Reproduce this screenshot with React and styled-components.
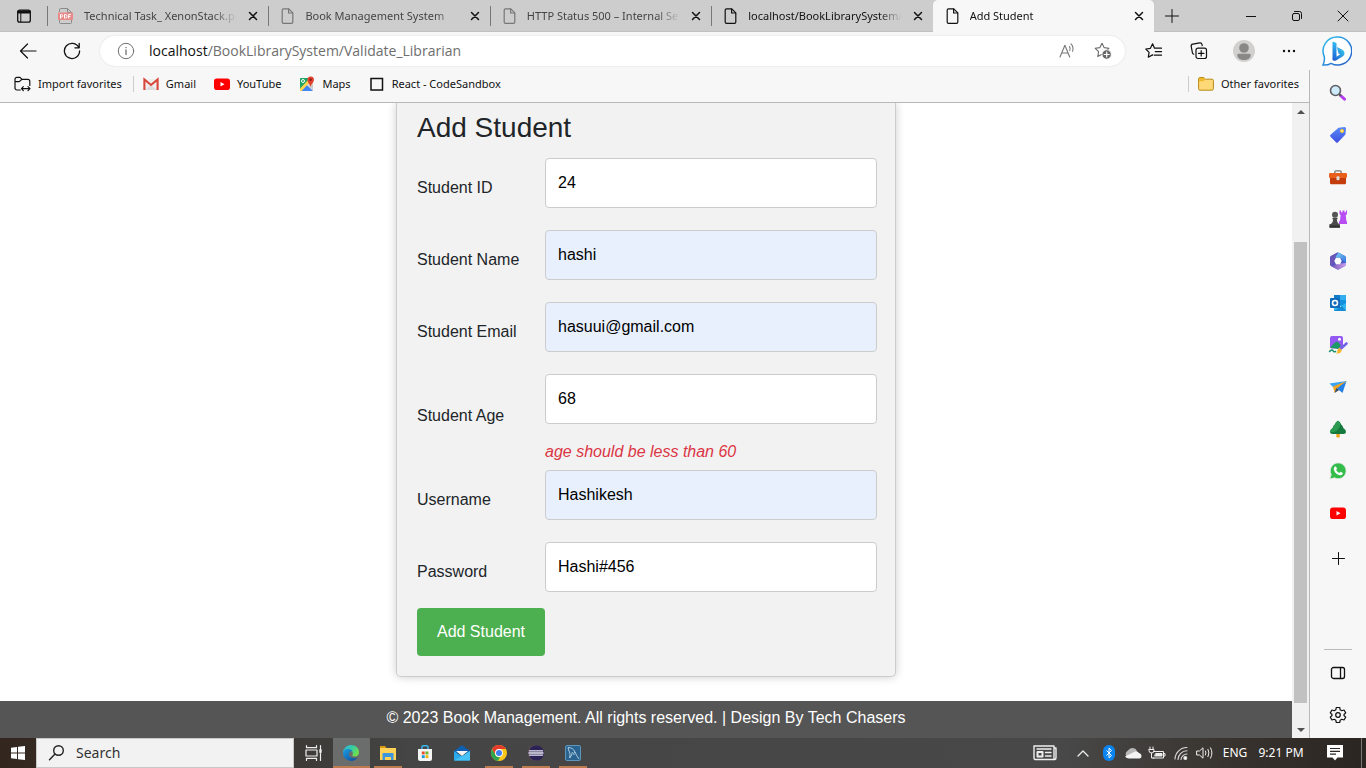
import React from 'react';
import styled, { createGlobalStyle, css } from 'styled-components';

const GlobalStyle = createGlobalStyle`
  * { box-sizing: border-box; }
  body { margin: 0; }
  button { border: 0; padding: 0; background: none; color: inherit; font: inherit; cursor: pointer; }
  a { color: inherit; text-decoration: none; }
  svg { display: block; flex: none; }
`;

const uiFont = `"Noto Sans", "Open Sans", sans-serif`;
const addressFont = `"Open Sans", "Noto Sans", sans-serif`;
const pageFont = `"Liberation Sans", Arial, sans-serif`;

const Desktop = styled.div`
  height: 100vh;
  display: flex;
  flex-direction: column;
  overflow: hidden;
  background: #fff;
  font: 11px/16px ${uiFont};
  color: #111;
`;

/* ---------- tab strip ---------- */

const TabStrip = styled.header`
  flex: none;
  display: flex;
  height: 32px;
  background: #cdcdcd;
  box-shadow: inset 0 -1px #c0c0c0;
`;
const TabActions = styled.button`
  width: 47px;
  display: grid;
  place-items: center;
`;
const Tabs = styled.div`
  display: flex;
  flex: 0 1 1107px;
  min-width: 0;
`;
const Tab = styled.div`
  flex: 1 1 0;
  min-width: 0;
  display: flex;
  align-items: center;
  gap: 10px;
  padding: 0 9px 0 11px;
  position: relative;
  color: ${(p) => (p.$dim ? '#444' : '#111')};
  &::before {
    content: '';
    position: absolute;
    left: 0;
    top: 6px;
    width: 1px;
    height: 20px;
    background: ${(p) => (p.$active ? 'transparent' : '#777')};
  }
  ${(p) => p.$active && css`
    background: #f7f7f7;
    border-radius: 5px 5px 0 0;
  `}
`;
const TabTitle = styled.span`
  flex: 1;
  min-width: 0;
  white-space: nowrap;
  mask-image: linear-gradient(to right, #000 calc(100% - 24px), transparent);
`;
const TabClose = styled.button`
  flex: none;
  width: 12px;
  height: 16px;
  display: grid;
  place-items: center;
  color: #111;
`;
const NewTab = styled.button`
  width: 36px;
  display: grid;
  place-items: center;
`;
const WindowButtons = styled.div`
  display: flex;
  margin-left: auto;
`;
const WindowButton = styled.button`
  width: 46px;
  display: grid;
  place-items: center;
`;

/* ---------- toolbar ---------- */

const Toolbar = styled.nav`
  flex: none;
  display: flex;
  align-items: center;
  height: 38px;
  padding: 0 4px 0 6px;
  background: #f7f7f7;
`;
const ToolButton = styled.button`
  flex: none;
  width: ${(p) => p.$width || 45}px;
  height: 30px;
  display: grid;
  place-items: center;
`;
const Omnibox = styled.div`
  flex: 1;
  min-width: 0;
  display: flex;
  align-items: center;
  height: 30px;
  margin: 0 6px;
  padding: 0 4px 0 17px;
  background: #fff;
  border-radius: 15px;
  box-shadow: 0 0 2px #0002;
  font: 14px/20px ${addressFont};
`;
const Host = styled.label`
  margin-left: 14px;
`;
const Address = styled.input`
  flex: 1;
  min-width: 0;
  padding: 0;
  border: 0;
  outline: 0;
  background: none;
  color: #6e6e6e;
  font: inherit;
`;

/* ---------- browser body ---------- */

const Body = styled.div`
  flex: 1;
  min-height: 0;
  display: flex;
`;
const Viewport = styled.div`
  flex: 1;
  min-width: 0;
  display: flex;
  flex-direction: column;
`;
const Favorites = styled.nav`
  flex: none;
  display: flex;
  align-items: center;
  height: 33px;
  padding: 0 10px 4px 14px;
  gap: 18px;
  background: #f7f7f7;
  border-bottom: 1px solid #b8b8b8;
`;
const Favorite = styled.a`
  display: flex;
  align-items: center;
  gap: 7px;
  white-space: nowrap;
`;
const FavoriteGroup = styled.div`
  display: flex;
  align-items: center;
  gap: 9px;
  margin-left: ${(p) => (p.$end ? 'auto' : '-7px')};
`;
const Divider = styled.span`
  width: 1px;
  height: 16px;
  background: #ccc;
`;
const PageArea = styled.div`
  flex: 1;
  min-height: 0;
  display: flex;
`;
const Page = styled.main`
  flex: 1;
  min-width: 0;
  display: flex;
  flex-direction: column;
  justify-content: flex-end;
  overflow: hidden;
  background: #fff;
  color: #212529;
  font: 16px/24px ${pageFont};
`;
const Scrollbar = styled.div`
  flex: none;
  width: 17px;
  display: flex;
  flex-direction: column;
  align-items: center;
  background: #f1f1f1;
`;
const ScrollArrow = styled.button`
  width: 17px;
  height: 17px;
  display: grid;
  place-items: center;
`;
const ScrollTrack = styled.div`
  flex: 1;
  display: flex;
  flex-direction: column;
  justify-content: flex-end;
  padding-bottom: 18px;
`;
const ScrollThumb = styled.div`
  width: 13px;
  height: 79%;
  background: #c1c1c1;
`;

/* ---------- student form ---------- */

const Card = styled.form`
  width: 500px;
  max-width: 100%;
  align-self: center;
  padding: 7px 18px 20px 20px;
  border: 1px solid #ccc;
  border-top: 0;
  border-radius: 0 0 5px 5px;
  background: #f2f2f2;
  box-shadow: 0 0 10px rgba(0, 0, 0, 0.2);
`;
const Title = styled.h1`
  margin: 0 0 6px;
  font-size: 28px;
  font-weight: 400;
  line-height: 36px;
`;
const Field = styled.div`
  display: grid;
  grid-template-columns: 128px 1fr;
  align-items: center;
`;
const FieldBody = styled.div`
  padding: 6px 0 ${(p) => (p.$error ? 0 : 16)}px;
`;
const TextBox = styled.input`
  display: block;
  width: 100%;
  height: 50px;
  padding: 0 12px;
  border: 1px solid #ccc;
  border-radius: 4px;
  background: ${(p) => (p.$filled ? '#e8f0fe' : '#fff')};
  color: #000;
  font: inherit;
`;
const ErrorText = styled.em`
  display: block;
  padding-top: 16px;
  color: #dc3545;
`;
const Submit = styled.button`
  display: block;
  width: 128px;
  height: 48px;
  border-radius: 4px;
  background: #4caf50;
  color: #fff;
`;
const Footer = styled.footer`
  margin-top: 24px;
  height: 37px;
  padding-top: 5px;
  background: #555;
  color: #fff;
  text-align: center;
`;

/* ---------- sidebar ---------- */

const Sidebar = styled.aside`
  flex: none;
  width: 57px;
  display: flex;
  flex-direction: column;
  align-items: center;
  padding: 2px 0;
  background: #f7f7f7;
  border-left: 1px solid #b8b8b8;
`;
const SideButton = styled.button`
  flex: none;
  width: 42px;
  height: ${(p) => (p.$tall ? 48 : 42)}px;
  display: grid;
  place-items: center;
`;
const SideRule = styled.span`
  width: 28px;
  height: 1px;
  margin: auto 0 2px;
  background: #bbb;
`;

/* ---------- taskbar ---------- */

const Taskbar = styled.footer`
  flex: none;
  display: flex;
  height: 30px;
  background: linear-gradient(to right, #33261e 0, #3d3a37 22%, #444544 30%, #484848 78%, #38332e 90%, #2b2521);
  color: #fff;
  font-size: 12px;
`;
const StartButton = styled.button`
  width: 36px;
  display: grid;
  place-items: center;
`;
const SearchBox = styled.label`
  width: 258px;
  display: flex;
  align-items: center;
  gap: 10px;
  padding-left: 11px;
  background: #f2f2f2;
  border: 1px solid #c8c8c8;
  color: #222;
`;
const SearchInput = styled.input`
  flex: 1;
  min-width: 0;
  padding: 0;
  border: 0;
  outline: 0;
  background: none;
  font: 14px/20px ${uiFont};
  &::placeholder { color: #333; opacity: 1; }
`;
const TaskApps = styled.div`
  display: flex;
  margin-left: 2px;
`;
const TaskButton = styled.button`
  width: 37px;
  padding-right: 2px;
  display: grid;
  place-items: center;
  background: ${(p) => (p.$active ? '#6b6d6c' : 'transparent')};
  position: relative;
  &::after {
    content: '';
    position: absolute;
    bottom: 0;
    left: ${(p) => (p.$active ? 0 : 4)}px;
    right: ${(p) => (p.$active ? 0 : 5)}px;
    height: 2px;
    background: ${(p) => (p.$open ? '#bd7b50' : 'transparent')};
  }
`;
const Tray = styled.div`
  display: flex;
  margin-left: auto;
`;
const TrayButton = styled.button`
  width: ${(p) => p.$width || 24}px;
  display: grid;
  place-items: center;
  white-space: nowrap;
`;
const ShowDesktop = styled.button`
  width: 5px;
  border-left: 1px solid #777;
`;

/* ---------- drawings ---------- */

const Line = ({ s = 16, w = s, h = s, box, sw = 1, color = 'currentColor', children }) => (
  <svg width={w} height={h} viewBox={box || `0 0 ${w} ${h}`} fill="none" stroke={color} strokeWidth={sw} strokeLinecap="round" strokeLinejoin="round" aria-hidden="true">
    {children}
  </svg>
);
const Art = ({ s = 18, w = s, h = s, children }) => (
  <svg width={w} height={h} viewBox={`0 0 ${w} ${h}`} aria-hidden="true">{children}</svg>
);

const FileIcon = ({ dim }) => (
  <Line sw={1.2} color={dim ? '#777' : '#111'}>
    <path d="M4.500.8h5.300l4 4v9.200a1.300 1.300 0 0 1-1.300 1.300h-8a1.300 1.300 0 0 1-1.300-1.300V2A1.300 1.300 0 0 1 4.500.8z" />
    <path d="M9.600 1v4h4" />
  </Line>
);
const PdfIcon = () => (
  <svg width="16" height="16" viewBox="0 0 16 16" aria-hidden="true">
    <path d="M1.500 4V1.500a1 1 0 0 1 1-1h7l4 4V14.500a1 1 0 0 1-1 1h-10a1 1 0 0 1-1-1V12M9.500.5v4h4" fill="none" stroke="#8b8b8b" />
    <rect x="0" y="4.500" width="15" height="7.500" rx=".5" fill="#e88a8a" />
    <g fill="none" stroke="#fff" strokeWidth="1">
      <path d="M2.500 10.500v-4h1a1.200 1.200 0 0 1 0 2.400h-1M6.500 6.500h.7a1.800 1.800 0 0 1 0 3.600h-.7zM10.700 10.500v-4h2.200M10.700 8.500h1.700" />
    </g>
  </svg>
);
const CloseIcon = () => <Line s={12} sw={1.5}><path d="M2.500 2.500l7 7M9.500 2.500l-7 7" /></Line>;
const TabActionsIcon = () => (
  <Line sw={1.3}>
    <rect x="1.700" y="2.200" width="12.600" height="12" rx="2" />
    <path d="M2.500 4h11" strokeWidth="2.800" />
    <path d="M4.800 5v9" strokeWidth="1" />
  </Line>
);
const BackIcon = () => <Line s={18} sw={1.2}><path d="M17 9H1.800M8.500 2L1.500 9l7 7" /></Line>;
const ReloadIcon = () => <Line s={18} sw={1.3}><path d="M15.800 5.500A7.600 7.600 0 1 0 16.600 9M16.200 1.500v4.300h-4.300" /></Line>;
const InfoIcon = () => <Line s={18} color="#707070"><circle cx="9" cy="9" r="7.700" /><path d="M9 8v4.500M9 5.300v.4" strokeWidth="1.300" /></Line>;
const ReadAloudIcon = () => (
  <Line s={18} color="#777" sw={1.1}>
    <path d="M2 15L6.900 3.200 11.700 15M3.700 11h6.300M11.500 4.600q1.200 1.800.3 4M13 1.800q3 3.200 1.600 7.500" />
  </Line>
);
const STAR = 'M8 1.200l2.100 4.400 4.700.7-3.400 3.400.8 4.900L8 12.300l-4.200 2.300.8-4.900L1.200 6.300l4.700-.7z';
const StarAddIcon = () => (
  <Line s={18} color="#6b6b6b" sw={1.1}>
    <path d={STAR} />
    <circle cx="12.700" cy="12.500" r="4.700" fill="#666" stroke="#fff" strokeWidth=".8" />
    <path d="M12.700 10v5M10.200 12.500h5" stroke="#fff" strokeWidth="1.200" />
  </Line>
);
const FavoritesIcon = () => (
  <Line s={18} sw={1.2}>
    <path d="M9.500 6.200L7.600 1.800 5.400 6.300l-4.600.7 3.300 3.300-.8 4.900 4.200-2.300.4.200M9.500 6.200h7M10.300 9.700h6.200M9.500 13.200h7" />
  </Line>
);
const CollectionsIcon = () => (
  <Line s={18} sw={1.2}>
    <rect x="6" y="6.200" width="10.500" height="10.300" rx="2" />
    <path d="M11.200 8.700v5.400M8.500 11.400h5.400M3.700 12.200A2 2 0 0 1 2.400 10.600L1.200 4.400A2 2 0 0 1 2.800 2.100l7-1.200a2 2 0 0 1 2.200 1.600l.2 1.200" />
  </Line>
);
const AvatarIcon = () => (
  <Art s={22}>
    <circle cx="11" cy="11" r="11" fill="#d2d0ce" />
    <circle cx="11" cy="8" r="4.800" fill="#8a8886" />
    <path d="M4.300 15.200q0-1.400 1.500-1.400h10.400q1.500 0 1.500 1.400c0 3-3 4.800-6.700 4.800s-6.700-1.800-6.700-4.800z" fill="#8a8886" />
  </Art>
);
const MoreIcon = () => <Art s={16}><g fill="#111"><circle cx="3" cy="8" r="1.200" /><circle cx="8" cy="8" r="1.200" /><circle cx="13" cy="8" r="1.200" /></g></Art>;
const BingIcon = () => (
  <Art s={30}>
    <defs>
      <linearGradient id="ring" x1="0" y1="0" x2="1" y2="1"><stop stopColor="#2ec3ee" /><stop offset="1" stopColor="#2356c9" /></linearGradient>
      <linearGradient id="stem" x1="0" y1="0" x2="0" y2="1"><stop stopColor="#37bdf5" /><stop offset="1" stopColor="#1762d6" /></linearGradient>
      <linearGradient id="bowl" x1="0" y1="1" x2="1" y2="0"><stop stopColor="#1c50cc" /><stop offset="1" stopColor="#3cd4ef" /></linearGradient>
    </defs>
    <path d="M15.500 1A14 14 0 1 1 9 27.300Q6 29.300 1 29q2-4 1.200-8.500A14 14 0 0 1 15.500 1z" fill="#fff" stroke="url(#ring)" strokeWidth="1.500" />
    <path d="M10.500 5.500l3.500 1.300c.4.200.5.400.5.800v12.900l-4 3z" fill="url(#stem)" />
    <path d="M15 11l5 2.400c3 1.500 3.300 5 1 6.800L14 24.500c-1.600.8-3.500.3-3.500-1.800l7.600-4.300-1.800-1.200z" fill="url(#bowl)" />
  </Art>
);
const PlusIcon = ({ s = 14 }) => <Line s={s}><path d={`M${s / 2} .5v${s - 1}M.5 ${s / 2}h${s - 1}`} /></Line>;

const ImportIcon = () => (
  <Line w={17} h={16} sw={1.200}>
    <path d="M6.300 14H3a2 2 0 0 1-2-2V3.300a2 2 0 0 1 2-2h3l2 2h5.800a2 2 0 0 1 2 2V9.500M1 5.600h4.300L8 3.300M9.300 10.700L7.500 12.700l1.800 2M7.800 12.700h8M14 10.700l2 2-2 2" />
  </Line>
);
const GmailIcon = () => (
  <Art s={16}>
    <path d="M1 3h14v11H1z" fill="#eee" /><path d="M2 14l6-5 6 5z" fill="#ddd" />
    <path d="M1.400 14V3.500L8 9l6.600-5.500V14" fill="none" stroke="#d9473b" strokeWidth="2.100" />
  </Art>
);
const YouTubeIcon = () => (
  <Art s={16}><rect y="2.500" width="16" height="11.500" rx="2.800" fill="red" /><path d="M6.500 5.900v4.600l4-2.300z" fill="#fff" /></Art>
);
const MapsIcon = () => (
  <Art s={16}>
    <rect x="1" y="2" width="13" height="13" rx="1" fill="#ddd" />
    <path d="M1 3q0-1 1-1h9L2 14H1z" fill="#1fa463" />
    <path d="M2 15l5.800-6L14 15z" fill="#4285f4" />
    <path d="M1 12.500L11 2l2 2L2.500 15H1z" fill="#ffd34e" />
    <path d="M9 9l2 2 3 3V8z" fill="#ccc" />
    <circle cx="4" cy="5" r="1.500" fill="none" stroke="#fff" />
    <path d="M11.500 11C11 8 8.500 7 8.500 3.800a3.200 3.200 0 0 1 6.400 0C14.900 7 12 8 11.500 11z" fill="#e3402e" />
    <circle cx="11.700" cy="3.700" r="1.200" fill="#8b1b12" />
  </Art>
);
const SquareIcon = () => <Art s={16}><rect x="2" y="2.500" width="11.500" height="11.500" fill="none" stroke="#111" strokeWidth="1.500" /></Art>;
const FolderIcon = () => (
  <Art s={16}>
    <path d="M.6 3q0-1.500 1.500-1.500h3.600l1.800 1.700h6.400q1.500 0 1.500 1.500v8q0 1.500-1.500 1.500H2.100Q.6 14.200.6 12.700z" fill="#ffd978" stroke="#b58a12" />
    <path d="M1 5.200h4.600l1.900-2L5.700 2H2Q1 2 1 3z" fill="#f0b92d" />
  </Art>
);

const MagnifierArt = () => (
  <Art>
    <path d="M11.500 11.500l4 3.700" stroke="#b53df2" strokeWidth="3" strokeLinecap="round" />
    <path d="M10 10l2 2" stroke="#555" strokeWidth="2" />
    <circle cx="6.500" cy="6.500" r="5" fill="#cdebfb" stroke="#5d5d62" strokeWidth="1.600" />
  </Art>
);
const TagArt = () => (
  <Art>
    <defs><linearGradient id="tag" x1="0" y1="0" x2="0" y2="1"><stop stopColor="#5b8df8" /><stop offset="1" stopColor="#3c4fe0" /></linearGradient></defs>
    <path d="M9.500 1.800L15.500 1q1.500 0 1.500 1.500L16.400 8.500 9 16.300q-1 1-2 0L1.500 10.800q-1-1 0-2z" fill="url(#tag)" />
    <circle cx="13" cy="5" r="1.600" fill="#fbe68a" stroke="#f5c52f" />
  </Art>
);
const ToolboxArt = () => (
  <Art>
    <path d="M5.800 5.500V4q0-1.200 1.200-1.200h4Q12.200 2.800 12.200 4v1.500" fill="none" stroke="#777" strokeWidth="1.300" />
    <rect x="0" y="5" width="18" height="5" rx="1.200" fill="#e8601c" />
    <path d="M1 10h16v5q0 1.200-1.200 1.200H2.200Q1 16.200 1 15z" fill="#c23c0c" />
    <rect x="7.500" y="8.200" width="3" height="4" rx="1" fill="#ddd" />
  </Art>
);
const ChessArt = () => (
  <Art w={18} h={20}>
    <path d="M10.500 1.500H12v1.700h1.500V1.500h2v1.700H17V1.500h1V5l-1.200 1.200.5 5.300.7 1.200V15h-8v-2.300l1-1.200.6-5.300L10.500 5z" fill="#b84df3" />
    <circle cx="6" cy="5.700" r="3" fill="#555" />
    <path d="M3.500 8.700h5v1.500H7.800q0 3 2 4.800h1v3.500H.5V15H2q2.200-1.800 2.200-4.800h-.7z" fill="#4b4b4b" />
    <path d="M.5 16.500h10.500v2.200H.5z" fill="#303030" />
  </Art>
);
const M365Art = () => (
  <Art>
    <defs>
      <linearGradient id="m1" x1="0" y1="0" x2="1" y2="1"><stop stopColor="#7fd2f2" /><stop offset="1" stopColor="#2f6fe0" /></linearGradient>
      <linearGradient id="m2" x1="0" y1="0" x2="1" y2="0"><stop stopColor="#6d54b4" /><stop offset="1" stopColor="#d0a0ee" /></linearGradient>
    </defs>
    <path d="M8 .7q1-.5 2 0l6 3.400q1 .6 1 1.800v6.200q0 1.200-1 1.800l-6 3.400q-1 .5-2 0l-6-3.400q-1-.6-1-1.800V5.900q0-1.200 1-1.800z" fill="#4459c6" />
    <path d="M9.500.6L16 4.100q1 .6 1 1.800v5.600L11.500 6 6 5.500z" fill="url(#m1)" />
    <path d="M9 .6Q6 3 6 7.500L5.500 12 2 13.900q-1-.6-1-1.800V5.900q0-1.200 1-1.800L7.500 1z" fill="#6a55b8" />
    <path d="M17 11v1.100q0 1.200-1 1.800l-6 3.400q-1 .5-2 0l-6-3.400q4 0 5.500-2.400h4z" fill="url(#m2)" />
    <path d="M7.500 5.800h3q.5 0 .8.500L12.700 9l-1.400 2.700q-.3.500-.8.500h-3q-.5 0-.8-.5L5.300 9l1.400-2.700q.3-.5.800-.5z" fill="#fff" />
  </Art>
);
const OutlookArt = () => (
  <Art>
    <path d="M5 1h11q1 0 1 1v10H5z" fill="#28a8ea" /><path d="M5 1h6v5H5z" fill="#0f7bc9" /><path d="M11 6h6v5h-6z" fill="#1490df" /><path d="M11 1h6v5h-6z" fill="#32aef0" />
    <path d="M5 9l6 4 6-4v7q0 1-1 1H5z" fill="#32b7f0" /><path d="M5 17l8-5 4 5z" fill="#168ad6" />
    <rect x="1" y="4" width="10" height="10" rx="1" fill="#0f6cbd" />
    <circle cx="6" cy="9" r="2.500" fill="none" stroke="#fff" strokeWidth="1.600" />
  </Art>
);
const DesignerArt = () => (
  <Art w={20} h={20}>
    <rect x="2" y="1" width="13" height="12.500" rx="2" fill="#9359f2" />
    <circle cx="11.500" cy="4.300" r="1.500" fill="#fff" />
    <path d="M2 13q5-6.500 7-6.500 1 0 4 4l-3 3.500q-4-1-8-1z" fill="#1b9a66" />
    <path d="M1.500 16.500q2.500-2.500 3.500-.8t2.500.8" fill="none" stroke="#18936d" strokeWidth="1.500" strokeLinecap="round" />
    <path d="M18.500 8.500L13 13.500" stroke="#7165ea" strokeWidth="2.600" strokeLinecap="round" />
    <path d="M11.500 12.800l2.200 2.200Q13.500 18.800 8 18.500q2-1.500 1.300-3.500z" fill="#f6b42b" />
  </Art>
);
const PlaneArt = () => (
  <Art>
    <path d="M.5 5.500L17.500 3 5 10z" fill="#38a5f4" />
    <path d="M17.500 3L7 9.500 13.500 15z" fill="#2381e8" />
    <path d="M17.500 3L4 8.500 5.500 15l3-5z" fill="#f5a623" /><path d="M5.500 15l1.800-5 3 2z" fill="#35506e" />
  </Art>
);
const TreeArt = () => (
  <Art>
    <rect x="7.300" y="12" width="3.500" height="5.500" rx="1" fill="#f0a51e" />
    <path d="M9 .8q2.500 1.200 3 3.500 2 1.500 2.300 3.700 2.700 1.500 2.700 4 0 2-2.500 2h-11Q1 14 1 12q0-2.500 2.700-4Q4 5.800 6 4.300 6.500 2 9 .8z" fill="#147a3e" />
    <path d="M9 .8Q6.500 2 6 4.300 4 5.800 3.700 8 1 9.500 1 12q6 1 9-4t-1-7.200z" fill="#2b9a51" />
  </Art>
);
const WhatsAppArt = () => (
  <Art>
    <path d="M.8 17l1.400-4.500A7.900 7.900 0 1 1 5.500 15.800z" fill="#35bd4c" stroke="#e8e8e8" strokeWidth=".8" />
    <path d="M5.800 4.600q1.200-.6 1.700.8l.5 1.300q0 .5-.9 1.400 1.200 2 3.200 2.900l1.200-1.300 2 1q.5.400.1 1.400-.8 1.500-2.700 1.200Q6 12 4.800 7.500 4.600 5.400 5.800 4.600z" fill="#fff" />
  </Art>
);
const PanelIcon = () => <Line sw={1.300}><rect x="1.500" y="2.500" width="13" height="11" rx="2" /><path d="M10.500 3v10" /></Line>;
const GearIcon = () => (
  <Line s={18} sw={1.200}>
    <path d="M7.300 1.500h3.400l.5 2.300 1.600.9 2.200-.7 1.700 2.900-1.700 1.600v1l1.700 1.600-1.700 2.900-2.200-.7-1.600.9-.5 2.300H7.300l-.5-2.300-1.600-.9-2.200.7-1.700-2.900L3 9.500v-1L1.300 6.900 3 4l2.200.7 1.600-.9z" />
    <circle cx="9" cy="9" r="2.300" />
  </Line>
);

const WindowsIcon = () => <Art w={16} h={16}><path d="M1 2.800l6-.8v5.600H1zM8 1.800L15 1v6.600H8zM1 8.500h6V14l-6-.8zM8 8.500h7V15l-7-.8z" fill="#fff" /></Art>;
const SearchIcon = () => <Line s={18} sw={1.400}><circle cx="10.500" cy="6.500" r="4.800" /><path d="M7 10l-5.500 5.800" /></Line>;
const TaskViewIcon = () => <Line s={18} sw={1.200} color="#eee"><path d="M1.500 1.500v2.200h10V1.500M1.500 16.500v-2.200h10v2.200M1 6h11v6H1zM15.500 1.500v3M15.500 9.500v7" /><path d="M15.500 6v2" strokeWidth="2.400" /></Line>;
const EdgeArt = () => (
  <Art>
    <defs>
      <linearGradient id="edgeTop" x1="0" y1="0" x2="1" y2=".6"><stop stopColor="#2bb2ee" /><stop offset=".5" stopColor="#36c9a6" /><stop offset="1" stopColor="#6fe04c" /></linearGradient>
      <linearGradient id="edgeLow" x1="0" y1="0" x2="1" y2="1"><stop stopColor="#1b9de2" /><stop offset="1" stopColor="#0c4a9c" /></linearGradient>
    </defs>
    <path d="M1 8.500A8 8 0 0 1 9 1c5 0 8 3.500 8 7 0 3-2 4.500-4.300 4.500-2 0-2.700-.8-2.300-1.500 1-1.500.3-4-2.400-4Q4 7 1 8.500z" fill="url(#edgeTop)" />
    <path d="M1 9q.5-4 5-4 3.700 0 4.700 2.500Q7.500 6.500 7 9.500C6.600 13 10 15.500 15.500 13.500A8 8 0 0 1 1 9z" fill="url(#edgeLow)" />
  </Art>
);
const ExplorerArt = () => (
  <Art><path d="M1 2h5l1.500 2H1z" fill="#d99b10" /><path d="M1 4h16v12H1z" fill="#ffd257" /><path d="M3.500 9h11v7h-2.500v-3H6v3H3.500z" fill="#3d95dc" /></Art>
);
const StoreArt = () => (
  <Art>
    <path d="M6 5V3q0-1.300 1.300-1.300h3.400Q12 1.700 12 3v2" fill="none" stroke="#3cb6ec" strokeWidth="1.500" />
    <path d="M2 5h14v10q0 2-2 2H4q-2 0-2-2z" fill="#f5f5f5" />
    <path d="M5.800 7.500h2.900v2.900H5.800z" fill="#e8502a" /><path d="M9.500 7.500h2.900v2.900H9.500z" fill="#6ab52e" /><path d="M5.800 11.200h2.900v2.900H5.800z" fill="#1a9be0" /><path d="M9.500 11.200h2.900v2.900H9.500z" fill="#f5b70b" />
  </Art>
);
const MailArt = () => (
  <Art><path d="M1 7l8-6 8 6v2H1z" fill="#0f5fae" /><path d="M3 7h12l-6 5z" fill="#f3f3f3" /><path d="M1 7l8 5.500L17 7v9.500H1z" fill="#2aa9ec" /><path d="M1 16.500L11 11l6-4v9.500z" fill="#45c3f7" /></Art>
);
const ChromeArt = () => (
  <Art>
    <circle cx="9" cy="9" r="8" fill="#fbc61c" />
    <path d="M9 1a8 8 0 0 1 7 4H9a4 4 0 0 0-3.600 5.700L2 5.200A8 8 0 0 1 9 1z" fill="#e33b2e" />
    <path d="M2 5.200l3.500 5.800A4 4 0 0 0 10 13l-2 4A8 8 0 0 1 2 5.200z" fill="#2da44e" />
    <circle cx="9" cy="9" r="3.900" fill="#fff" /><circle cx="9" cy="9" r="3" fill="#3e7ef0" />
  </Art>
);
const EclipseArt = () => (
  <Art><circle cx="8.800" cy="9" r="7.800" fill="#8f6a5c" /><circle cx="9.200" cy="9" r="7.800" fill="#2c2255" /><path d="M2 6.800h14M1.500 9h15M2 11.200h14" stroke="#e8e6f2" strokeWidth="1.300" /></Art>
);
const WorkbenchArt = () => (
  <Art>
    <rect x="1.500" y="1.500" width="15" height="15" rx="1.500" fill="#2a6390" stroke="#5d97bd" />
    <path d="M4 3.500q5 0 7 4.500 1.500 4 4 7M4 3.500q.5 3 1.500 4.500t.2 6l2-3Q8 9 8.500 8M11 8q-2 1-1 3" fill="none" stroke="#cde3f0" strokeWidth=".8" />
  </Art>
);
const NewsIcon = () => <Line w={24} h={18} color="#eee" sw={1.400}><path d="M21 4h2v10q0 1.500-1.500 1.500M1 2h20v12q0 1.500 1 1.500H3Q1 15.500 1 14zM4 5h14M12.500 8.500H18M12.500 12H18" /><rect x="4.500" y="8" width="5" height="4.500" strokeWidth="2" /></Line>;
const ChevronIcon = () => <Line w={14} h={10} color="#eee" sw={1.300}><path d="M2 8l5-5 5 5" /></Line>;
const BluetoothArt = () => <Art w={12} h={16}><rect width="12" height="16" rx="6" fill="#0a84f0" /><path d="M3.500 5.500l5 5L6 12.800V3.200L8.500 5.500l-5 5" fill="none" stroke="#fff" /></Art>;
const CloudArt = () => <Art w={18} h={14}><path d="M4.500 12A4 4 0 0 1 4 4.500 5 5 0 0 1 13 5l-6 7z" fill="#b8b8b8" /><path d="M5 12.500q-2.500 0-4-2L10 6q3-2 5 1 2.500.5 2.500 3T15 12.500z" fill="#f4f4f4" /></Art>;
const BatteryIcon = () => <Line w={18} h={14} color="#eee"><path d="M5.500 5.500h10v6.500H5M15.500 7.500h1.500v2.500h-1.500M2 1v2.500M5 1v2.500M1 3.500h5V5Q6 7 3.500 7 1 7 1 5zM3.500 7v5H6" /><path d="M8 7.500h6V10H7z" fill="#eee" /></Line>;
const WifiIcon = () => <Line s={16} color="#ddd" sw={1.100}><path d="M2 14A12 12 0 0 1 14 2.500M5 14.500A9 9 0 0 1 14 5.800M8 14.500a6 6 0 0 1 6-5.500" /><circle cx="12.300" cy="13" r="1.500" fill="#fff" /></Line>;
const SoundIcon = () => <Line w={18} h={14} color="#eee"><path d="M1 5h2.500L7 1.800v10.400L3.500 9H1zM9.500 5q1 2 0 4M12 3.300q2 3.700 0 7.400M14.500 1.800q3 5.200 0 10.400" /></Line>;
const NotificationArt = () => <Art s={18}><path d="M1 1h16v12.500h-5.500L9 16.500l-2.500-3H1z" fill="#fff" /><path d="M4 4.500h10M4 7.300h10M4 10.100h6" stroke="#2d2825" strokeWidth="1.200" /></Art>;

/* ---------- data ---------- */

const tabs = [
  { title: 'Technical Task_ XenonStack.pd', icon: <PdfIcon />, dim: true },
  { title: 'Book Management System', icon: <FileIcon dim />, dim: true },
  { title: 'HTTP Status 500 – Internal Se', icon: <FileIcon dim />, dim: true },
  { title: 'localhost/BookLibrarySystem/', icon: <FileIcon /> },
  { title: 'Add Student', icon: <FileIcon />, active: true },
];
const favorites = [
  ['Gmail', <GmailIcon />],
  ['YouTube', <YouTubeIcon />],
  ['Maps', <MapsIcon />],
  ['React - CodeSandbox', <SquareIcon />],
];
const fields = [
  { id: 'student-id', label: 'Student ID', value: '24' },
  { id: 'student-name', label: 'Student Name', value: 'hashi', filled: true },
  { id: 'student-email', label: 'Student Email', value: 'hasuui@gmail.com', filled: true },
  { id: 'student-age', label: 'Student Age', value: '68', error: 'age should be less than 60' },
  { id: 'username', label: 'Username', value: 'Hashikesh', filled: true },
  { id: 'password', label: 'Password', value: 'Hashi#456' },
];
const sideApps = [
  ['Search', <MagnifierArt />], ['Shopping', <TagArt />], ['Tools', <ToolboxArt />], ['Games', <ChessArt />],
  ['Microsoft 365', <M365Art />], ['Outlook', <OutlookArt />], ['Image Creator', <DesignerArt />], ['Drop', <PlaneArt />],
  ['E-tree', <TreeArt />], ['WhatsApp', <WhatsAppArt />], ['YouTube', <YouTubeIcon />],
];
const taskApps = [
  ['Task view', <TaskViewIcon />], ['Microsoft Edge', <EdgeArt />, true, true], ['File Explorer', <ExplorerArt />, true],
  ['Microsoft Store', <StoreArt />], ['Mail', <MailArt />], ['Google Chrome', <ChromeArt />, true],
  ['Eclipse', <EclipseArt />, true], ['MySQL Workbench', <WorkbenchArt />, true],
];
const trayItems = [
  ['News', <NewsIcon />, 48], ['Show hidden icons', <ChevronIcon />, 28], ['Bluetooth', <BluetoothArt />],
  ['OneDrive', <CloudArt />], ['Battery', <BatteryIcon />], ['Network', <WifiIcon />], ['Volume', <SoundIcon />],
];

export default function App() {
  return (
    <Desktop>
      <GlobalStyle />
      <TabStrip>
        <TabActions aria-label="Tab actions"><TabActionsIcon /></TabActions>
        <Tabs role="tablist">
          {tabs.map((t) => (
            <Tab key={t.title} role="tab" aria-selected={!!t.active} $active={t.active} $dim={t.dim}>
              {t.icon}
              <TabTitle>{t.title}</TabTitle>
              <TabClose aria-label={`Close ${t.title}`}><CloseIcon /></TabClose>
            </Tab>
          ))}
        </Tabs>
        <NewTab aria-label="New tab"><PlusIcon /></NewTab>
        <WindowButtons>
          <WindowButton aria-label="Minimize"><Line s={10}><path d="M0 5.500h10" /></Line></WindowButton>
          <WindowButton aria-label="Restore"><Line s={12}><rect x="1.500" y="3.500" width="7" height="7" rx="1.500" /><path d="M3.500 1.500h5a2 2 0 0 1 2 2v5" /></Line></WindowButton>
          <WindowButton aria-label="Close window"><Line s={12}><path d="M1 1l10 10M11 1L1 11" /></Line></WindowButton>
        </WindowButtons>
      </TabStrip>

      <Toolbar>
        <ToolButton $width={44} aria-label="Back"><BackIcon /></ToolButton>
        <ToolButton $width={44} aria-label="Refresh"><ReloadIcon /></ToolButton>
        <Omnibox>
          <InfoIcon />
          <Host htmlFor="address">localhost</Host>
          <Address id="address" defaultValue="/BookLibrarySystem/Validate_Librarian" />
          <ToolButton $width={36} aria-label="Read aloud"><ReadAloudIcon /></ToolButton>
          <ToolButton $width={36} aria-label="Add to favorites"><StarAddIcon /></ToolButton>
        </Omnibox>
        <ToolButton aria-label="Favorites"><FavoritesIcon /></ToolButton>
        <ToolButton aria-label="Collections"><CollectionsIcon /></ToolButton>
        <ToolButton aria-label="Profile"><AvatarIcon /></ToolButton>
        <ToolButton aria-label="Settings and more"><MoreIcon /></ToolButton>
        <ToolButton $width={51} aria-label="Bing"><BingIcon /></ToolButton>
      </Toolbar>

      <Body>
        <Viewport>
          <Favorites>
            <Favorite href="#import"><ImportIcon />Import favorites</Favorite>
            <FavoriteGroup>
              <Divider />
              <Favorite href="#Gmail">{favorites[0][1]}Gmail</Favorite>
            </FavoriteGroup>
            {favorites.slice(1).map(([name, icon]) => (
              <Favorite key={name} href={`#${name.split(' ')[0]}`}>{icon}{name}</Favorite>
            ))}
            <FavoriteGroup $end>
              <Divider />
              <Favorite href="#other"><FolderIcon />Other favorites</Favorite>
            </FavoriteGroup>
          </Favorites>
          <PageArea>
            <Page>
              <Card onSubmit={(e) => e.preventDefault()}>
                <Title>Add Student</Title>
                {fields.map((f) => (
                  <Field key={f.id}>
                    <label htmlFor={f.id}>{f.label}</label>
                    <FieldBody $error={f.error}>
                      <TextBox id={f.id} defaultValue={f.value} $filled={f.filled} />
                      {f.error && <ErrorText>{f.error}</ErrorText>}
                    </FieldBody>
                  </Field>
                ))}
                <Submit type="submit">Add Student</Submit>
              </Card>
              <Footer>© 2023 Book Management. All rights reserved. | Design By Tech Chasers</Footer>
            </Page>
            <Scrollbar>
              <ScrollArrow aria-label="Scroll up"><Art w={8} h={4}><path d="M0 4l4-4 4 4z" fill="#505050" /></Art></ScrollArrow>
              <ScrollTrack><ScrollThumb /></ScrollTrack>
              <ScrollArrow aria-label="Scroll down"><Art w={8} h={4}><path d="M0 0l4 4 4-4z" fill="#505050" /></Art></ScrollArrow>
            </Scrollbar>
          </PageArea>
        </Viewport>
        <Sidebar>
          {sideApps.map(([name, icon]) => <SideButton key={name} aria-label={name}>{icon}</SideButton>)}
          <SideButton $tall aria-label="Customize"><PlusIcon s={13} /></SideButton>
          <SideRule />
          <SideButton aria-label="Hide sidebar"><PanelIcon /></SideButton>
          <SideButton aria-label="Settings"><GearIcon /></SideButton>
        </Sidebar>
      </Body>

      <Taskbar>
        <StartButton aria-label="Start"><WindowsIcon /></StartButton>
        <SearchBox>
          <SearchIcon />
          <SearchInput placeholder="Search" aria-label="Search" />
        </SearchBox>
        <TaskApps>
          {taskApps.map(([name, icon, open, active]) => (
            <TaskButton key={name} aria-label={name} $open={open} $active={active}>{icon}</TaskButton>
          ))}
        </TaskApps>
        <Tray>
          {trayItems.map(([name, icon, width]) => <TrayButton key={name} aria-label={name} $width={width}>{icon}</TrayButton>)}
          <TrayButton $width={36}>ENG</TrayButton>
          <TrayButton $width={56}>9:21 PM</TrayButton>
          <TrayButton $width={52} aria-label="Notifications"><NotificationArt /></TrayButton>
          <ShowDesktop aria-label="Show desktop" />
        </Tray>
      </Taskbar>
    </Desktop>
  );
}
